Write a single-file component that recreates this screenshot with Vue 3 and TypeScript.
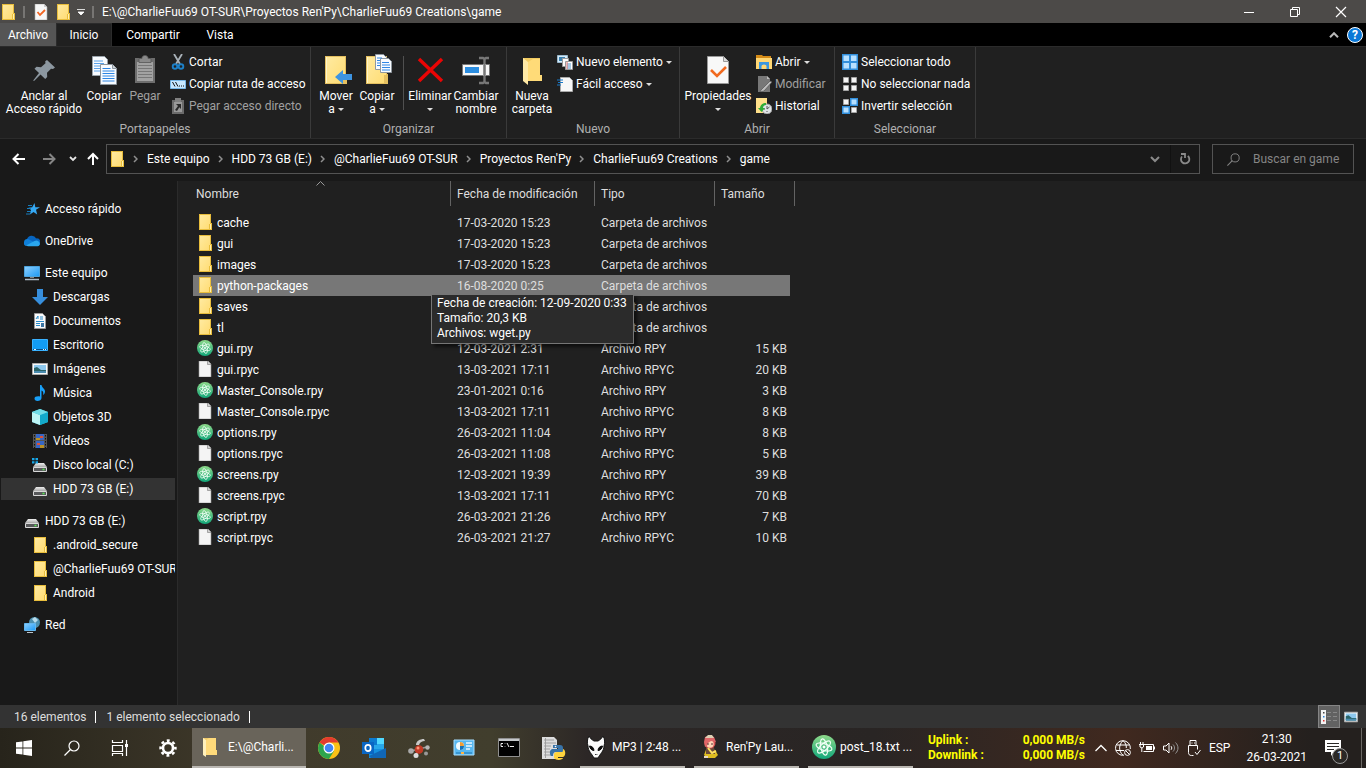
<script setup lang="ts">
interface NavItem { label: string; icon: string; level: number; active?: boolean }
interface FileRow { name: string; date: string; type: string; size: string; icon: string; selected?: boolean }
interface SmallAction { label: string; icon: string; menu?: boolean; disabled?: boolean }

const selectActions: SmallAction[] = [
  { label: 'Seleccionar todo', icon: 'sel-all' },
  { label: 'No seleccionar nada', icon: 'sel-none' },
  { label: 'Invertir selección', icon: 'sel-inv' },
]
const openActions: SmallAction[] = [
  { label: 'Abrir', icon: 'open', menu: true },
  { label: 'Modificar', icon: 'edit', disabled: true },
  { label: 'Historial', icon: 'history' },
]
const newActions: SmallAction[] = [
  { label: 'Nuevo elemento', icon: 'new-item', menu: true },
  { label: 'Fácil acceso', icon: 'easy', menu: true },
]
const clipActions: SmallAction[] = [
  { label: 'Cortar', icon: 'cut' },
  { label: 'Copiar ruta de acceso', icon: 'path' },
  { label: 'Pegar acceso directo', icon: 'shortcut', disabled: true },
]

const crumbs: string[] = ['Este equipo', 'HDD 73 GB (E:)', '@CharlieFuu69 OT-SUR', "Proyectos Ren'Py", 'CharlieFuu69 Creations', 'game']

const navGroups: NavItem[][] = [
  [{ label: 'Acceso rápido', icon: 'quick', level: 1 }],
  [{ label: 'OneDrive', icon: 'onedrive', level: 1 }],
  [
    { label: 'Este equipo', icon: 'pc', level: 1 },
    { label: 'Descargas', icon: 'download', level: 2 },
    { label: 'Documentos', icon: 'documents', level: 2 },
    { label: 'Escritorio', icon: 'desktop', level: 2 },
    { label: 'Imágenes', icon: 'pictures', level: 2 },
    { label: 'Música', icon: 'music', level: 2 },
    { label: 'Objetos 3D', icon: 'cube', level: 2 },
    { label: 'Vídeos', icon: 'videos', level: 2 },
    { label: 'Disco local (C:)', icon: 'disk-win', level: 2 },
    { label: 'HDD 73 GB (E:)', icon: 'disk', level: 2, active: true },
  ],
  [
    { label: 'HDD 73 GB (E:)', icon: 'disk', level: 1 },
    { label: '.android_secure', icon: 'folder', level: 2 },
    { label: '@CharlieFuu69 OT-SUR', icon: 'folder', level: 2 },
    { label: 'Android', icon: 'folder', level: 2 },
  ],
  [{ label: 'Red', icon: 'network', level: 1 }],
]

const folder = (name: string, date: string, selected = false): FileRow =>
  ({ name, date, type: 'Carpeta de archivos', size: '', icon: 'folder', selected })
const rpy = (name: string, date: string, size: string): FileRow =>
  ({ name: name + '.rpy', date, type: 'Archivo RPY', size: size + ' KB', icon: 'atom' })
const rpyc = (name: string, date: string, size: string): FileRow =>
  ({ name: name + '.rpyc', date, type: 'Archivo RPYC', size: size + ' KB', icon: 'file' })

const files: FileRow[] = [
  folder('cache', '17-03-2020 15:23'),
  folder('gui', '17-03-2020 15:23'),
  folder('images', '17-03-2020 15:23'),
  folder('python-packages', '16-08-2020 0:25', true),
  folder('saves', '17-03-2020 15:23'),
  folder('tl', '17-03-2020 15:23'),
  rpy('gui', '12-03-2021 2:31', '15'),
  rpyc('gui', '13-03-2021 17:11', '20'),
  rpy('Master_Console', '23-01-2021 0:16', '3'),
  rpyc('Master_Console', '13-03-2021 17:11', '8'),
  rpy('options', '26-03-2021 11:04', '8'),
  rpyc('options', '26-03-2021 11:08', '5'),
  rpy('screens', '12-03-2021 19:39', '39'),
  rpyc('screens', '13-03-2021 17:11', '70'),
  rpy('script', '26-03-2021 21:26', '7'),
  rpyc('script', '26-03-2021 21:27', '10'),
]

const pinned: { icon: string; label: string }[] = [
  { icon: 'chrome', label: 'Chrome' },
  { icon: 'outlook', label: 'Outlook' },
  { icon: 'molecule', label: 'Monitor' },
  { icon: 'control', label: 'Panel de control' },
  { icon: 'cmd', label: 'Símbolo del sistema' },
  { icon: 'python', label: 'Python' },
]
const running: { icon: string; label: string }[] = [
  { icon: 'foobar', label: 'MP3 | 2:48 ...' },
  { icon: 'renpy', label: "Ren'Py Lau..." },
  { icon: 'atom', label: 'post_18.txt ...' },
]
</script>

<template>
  <div class="screen">
    <svg class="defs" aria-hidden="true">
      <defs>
        <linearGradient id="gFolder" x1="0" y1="0" x2="1" y2="1">
          <stop offset="0" stop-color="#ffeaa0" /><stop offset="1" stop-color="#ffdc73" />
        </linearGradient>
        <linearGradient id="gBlue" x1="0" y1="0" x2="1" y2="1">
          <stop offset="0" stop-color="#8fd0ff" /><stop offset="1" stop-color="#1c9af5" />
        </linearGradient>
        <linearGradient id="gAtom" x1="0" y1="0" x2="0" y2="1">
          <stop offset="0" stop-color="#8ed98a" /><stop offset="1" stop-color="#12a77a" />
        </linearGradient>
        <linearGradient id="gDisk" x1="0" y1="0" x2="0" y2="1">
          <stop offset="0" stop-color="#eeeeee" /><stop offset="1" stop-color="#a9a9a9" />
        </linearGradient>
      </defs>
      <symbol id="folder" viewBox="0 0 16 16">
        <path d="M2 0h12v9h1v7H2z" fill="#e8bd3c" /><path d="M3 1h10v9h-1v5H3z" fill="url(#gFolder)" /><path d="M13 10h1v5h-1z" fill="#fff0b0" />
      </symbol>
      <symbol id="check-file" viewBox="0 0 16 16">
        <path d="M2 0h9l3 3v13H2z" fill="#f7f7f7" stroke="#aaa" stroke-width=".6" /><path d="M11 0v3h3" fill="#ccc" /><path d="M4.500 8l2.500 3 5-5" fill="none" stroke="#f26522" stroke-width="1.800" />
      </symbol>
      <symbol id="file" viewBox="0 0 16 16">
        <path d="M2 0h9l3 3v13H2z" fill="#f4f4f4" stroke="#999" stroke-width=".6" /><path d="M10.500 0v3.500H14" fill="#cfcfcf" stroke="#888" stroke-width=".7" />
      </symbol>
      <symbol id="atom" viewBox="0 0 16 16">
        <circle cx="8" cy="8" r="8" fill="url(#gAtom)" />
        <g fill="none" stroke="#f0fff6" stroke-width=".8">
          <ellipse cx="8" cy="8" rx="2.200" ry="5.500" transform="rotate(-12 8 8)" />
          <ellipse cx="8" cy="8" rx="2.200" ry="5.500" transform="rotate(48 8 8)" />
          <ellipse cx="8" cy="8" rx="2.200" ry="5.500" transform="rotate(108 8 8)" />
        </g>
        <circle cx="8" cy="8" r="1" fill="#fff" />
      </symbol>
      <symbol id="pin" viewBox="0 0 32 32">
        <path d="M19 6l8 7.500-2 1.500-2-.3-4 4 .2 4.300-2 2-4.700-4.500L6 27l-.8-.6 5.800-7.400-4.500-4.200 2-2 4.500.4 4.500-4-.3-2z" fill="#8c97a0" />
      </symbol>
      <symbol id="copy" viewBox="0 0 32 32">
        <path d="M4.500 2.500h12l3 3v16h-15z" fill="#f8fbff" stroke="#9aa3ab" /><path d="M6 7h9M6 9.500h10M6 12h10M6 14.500h10M6 17h10" stroke="#5aa2ea" />
        <path d="M12.500 10.500h12l4 4v16h-16z" fill="#f8fbff" stroke="#8e979f" /><path d="M24.500 10.500v4h4" fill="#cdd5dc" stroke="#8e979f" />
        <path d="M14.500 14.500h8M14.500 17h12M14.500 19.500h12M14.500 22h12M14.500 24.500h12M14.500 27h12" stroke="#2e86e4" />
      </symbol>
      <symbol id="paste" viewBox="0 0 32 32">
        <path d="M6 4h20v25H6z" fill="#6e6e6e" /><path d="M8 8h16v19H8z" fill="#a2a2a2" /><path d="M10 4.500h3V3l2-1.500h2L19 3v1.500h3v4H10z" fill="#8a8a8a" stroke="#555" stroke-width=".8" />
        <path d="M9 11.500h14M9 14.500h14M9 17.500h14M9 20.500h14M9 23.500h14" stroke="#777" />
      </symbol>
      <symbol id="cut" viewBox="0 0 16 16">
        <path d="M4 0l6 10M12 0L6 10" stroke="#a9b2b9" stroke-width="1.800" /><circle cx="5" cy="12.500" r="2.300" fill="none" stroke="#1d80c8" stroke-width="1.900" /><circle cx="11" cy="12.500" r="2.300" fill="none" stroke="#1d80c8" stroke-width="1.900" />
      </symbol>
      <symbol id="path" viewBox="0 0 16 16">
        <path d="M.5 4.500h15v8H.5z" fill="#c8e8ff" stroke="#78b8e8" /><path d="M2.500 6l2.500 4.500M5.500 6L8 10.500M9 10h1M11 10h1M13 10h1" stroke="#111" />
      </symbol>
      <symbol id="shortcut" viewBox="0 0 16 16">
        <path d="M2 2h12v14H2z" fill="#6b6b6b" /><path d="M4 4h8v10H4z" fill="#999" /><path d="M5 0h6v4H5z" fill="#808080" /><path d="M6 6h5v5L9.300 9.300 7 13l-2-1 3-4z" fill="#2a2a2a" />
      </symbol>
      <symbol id="big-folder" viewBox="0 0 32 32">
        <path d="M5 2h21v18h1v10H5z" fill="#e5c060" /><path d="M7 3h18v18h-2v8H7z" fill="url(#gFolder)" /><path d="M6 3h1v26H6z" fill="#fff4c8" />
      </symbol>
      <symbol id="move" viewBox="0 0 32 32">
        <use href="#big-folder" /><path d="M15 23l8-7v4h9v6h-9v4z" fill="#3d94e2" />
      </symbol>
      <symbol id="copy-to" viewBox="0 0 32 32">
        <use href="#big-folder" /><path d="M14.500.5h8l3 3v12h-11z" fill="#f8fbff" stroke="#8e979f" />
        <path d="M19.500 4.500h8l3 3v11h-11z" fill="#f8fbff" stroke="#8e979f" /><path d="M16 4h5M16 6.500h3M16 9h3M16 11.500h3M21 8.500h7M21 11h8M21 13.500h8M21 16h8" stroke="#2e86e4" />
      </symbol>
      <symbol id="delete" viewBox="0 0 32 32"><path d="M5 5l23 22M28 5L5 27" stroke="#ea0505" stroke-width="3.400" /></symbol>
      <symbol id="rename" viewBox="0 0 32 32">
        <path d="M2.500 10.500h27v11h-27z" fill="#f8f8f8" stroke="#777" /><path d="M5 13h14v6H5z" fill="#2b8de0" /><path d="M23 10h3v12h-3z" fill="#ddd" />
        <path d="M19 4h4l1.500 1L26 4h3M19 29h4l1.500-1 1.500 1h3M24.500 5v23" fill="none" stroke="#777" stroke-width="2.400" />
      </symbol>
      <symbol id="new-folder" viewBox="0 0 32 32">
        <path d="M7 4h17v17h2v6H11l-4-2z" fill="#f2cb61" /><path d="M7 4l5 4v23l-5-4z" fill="#ffe9a5" /><path d="M12 8l5-3h7v16h2v6H12z" fill="#ffdb78" />
      </symbol>
      <symbol id="new-item" viewBox="0 0 16 16">
        <path d="M.5 1.500h10v7H.5z" fill="#d4ebfa" stroke="#9bb9cc" /><path d="M2 3h6v4H2z" fill="#397fae" /><path d="M5.500 4.500h6v8h-6z" fill="#fafafa" stroke="#999" /><path d="M8.500 7.500h7v8h-7z" fill="#fff" stroke="#999" /><path d="M10 10h4M10 12h4M10 14h4" stroke="#4a92c9" /><path d="M10 8v7" stroke="#dc6c6c" />
      </symbol>
      <symbol id="easy" viewBox="0 0 16 16">
        <path d="M3.500 1.500h9l3 3v11h-12z" fill="#f8f8f8" stroke="#aaa" /><path d="M0 4h6M1 6.500h5M0 9h4" stroke="#1979c8" stroke-width="1.200" />
      </symbol>
      <symbol id="properties" viewBox="0 0 32 32">
        <path d="M5.500 2.500h16l5 5v22h-21z" fill="#f8f8f8" stroke="#999" /><path d="M21.500 2.500v5h5" fill="#ddd" stroke="#999" /><path d="M9 16l6 6 9-9" fill="none" stroke="#f16a20" stroke-width="2.600" />
      </symbol>
      <symbol id="open" viewBox="0 0 16 16">
        <path d="M0 1h6l1 1h8v3H0z" fill="#d58b17" /><path d="M0 4h16v11H0z" fill="#ffd774" /><path d="M3 8h10v7h-2.500v-3a2.500 1.500 0 0 0-5 0v3H3z" fill="#3b97df" />
      </symbol>
      <symbol id="edit" viewBox="0 0 16 16">
        <path d="M2 0h9l3 3v13H2z" fill="#777" /><path d="M11 0v3h3" fill="#bbb" /><path d="M5 14l9-9 2 1-8 9-4 1z" fill="#bcbcbc" stroke="#555" stroke-width=".7" />
      </symbol>
      <symbol id="history" viewBox="0 0 16 16">
        <path d="M0 0h11v15H0z" fill="#ffe08a" /><circle cx="11" cy="11" r="5" fill="#dfe3e6" stroke="#999" /><path d="M11 8v3l2.500-2M8 11h1M11 14v-1" fill="none" stroke="#555" /><path d="M10 5C6 5 4 8 4 10H2l3.500 4L9 10H7c0-2 1-3 3-3z" fill="#30ad36" />
      </symbol>
      <symbol id="sel-all" viewBox="0 0 16 16">
        <path d="M0 0h16v16H0z" fill="#318fdc" /><path d="M1.500 1.500h5.500v5.500H1.500zM9 1.500h5.500v5.500H9zM1.500 9h5.500v5.500H1.500zM9 9h5.500v5.500H9z" fill="#b7e0ff" />
      </symbol>
      <symbol id="sel-none" viewBox="0 0 16 16"><path d="M1.500 1.500h5v5h-5zM9.500 1.500h5v5h-5zM1.500 9.500h5v5h-5zM9.500 9.500h5v5h-5z" fill="#f5f5f5" stroke="#a5a5a5" /></symbol>
      <symbol id="sel-inv" viewBox="0 0 16 16">
        <path d="M1.500 1.500h5v5h-5zM9.500 9.500h5v5h-5z" fill="#f5f5f5" stroke="#a5a5a5" /><path d="M8 0h8v8H8zM0 8h8v8H0z" fill="#318fdc" /><path d="M9.500 1.500h5v5h-5zM1.500 9.500h5v5h-5z" fill="#b7e0ff" />
      </symbol>
      <symbol id="quick" viewBox="0 0 16 16">
        <path d="M10.500 2l.8 4.200H16l-4 2.600 1.200 4.700L9.500 11 6 13.500l1-4.500-2.500-2.300 3.700-.4z" fill="#35a8f3" /><path d="M4 4.500h4M3 7.500h4M3 10.500h4M2 13h4" stroke="#177cbd" />
      </symbol>
      <symbol id="onedrive" viewBox="0 0 16 16">
        <path d="M3 12a3.500 3.500 0 0 1 0-6 5 5 0 0 1 9.200-.6A3.700 3.700 0 0 1 13 13z" fill="#0765c0" /><path d="M0 9a3.400 3.400 0 0 1 4-3l6 3-8 4A3 3 0 0 1 0 9z" fill="#0f7fd8" /><path d="M2 12.500L10.500 8a4 4 0 0 1 5 1.500 2.500 2.500 0 0 1-2 3.700H4z" fill="#2aa7ef" />
      </symbol>
      <symbol id="pc" viewBox="0 0 16 16">
        <path d="M.5 1.500h15v10H.5z" fill="url(#gBlue)" stroke="#4da3dc" /><path d="M6 12h4v1H6z" fill="#888" /><path d="M1 14.500h14" stroke="#aebcc8" stroke-width="1.500" />
      </symbol>
      <symbol id="download" viewBox="0 0 16 16"><path d="M5 0h6v8h5l-8 8-8-8h5z" fill="#378fdd" /></symbol>
      <symbol id="documents" viewBox="0 0 16 16">
        <path d="M2.500.5h8l3 3v12h-11z" fill="#fafafa" stroke="#9a9a9a" /><path d="M4 6l2-3v3M8 4h3M8 6h3M4 8.500h8M4 10.500h4M4 12.500h4" fill="none" stroke="#298bc9" /><path d="M9 10h3v4H9z" fill="#3c75a3" />
      </symbol>
      <symbol id="desktop" viewBox="0 0 16 16"><path d="M.5 2.500h15v11H.5z" fill="#129cf5" stroke="#3ab2ff" /><path d="M1 12.500h14" stroke="#07508a" /><path d="M2 12.500h2M11 12.500h1M13 12.500h1" stroke="#e0f3ff" /></symbol>
      <symbol id="pictures" viewBox="0 0 16 16">
        <path d="M.5 2.500h15v11H.5z" fill="#f8f8f8" stroke="#aaa" /><path d="M2 4h12v8H2z" fill="#8dc8ee" /><path d="M2 7l3-1 4 3h5v3H2z" fill="#2b6468" /><path d="M2 10h12v2H2z" fill="#4a8cb0" />
      </symbol>
      <symbol id="music" viewBox="0 0 16 16"><path d="M8 0h1.500c.5 3 4 4 3.500 7-.3 1.500-1 2.500-2 3 1-3-.5-4-1.500-4.500V13c0 2-2 3-4 3s-3-1-3-2.500S4.500 11 8 11.500z" fill="#18a0f8" /></symbol>
      <symbol id="cube" viewBox="0 0 16 16"><path d="M8 0l8 3v10l-8 3-8-3V3z" fill="#33c3d7" /><path d="M0 3l8 3v10l-8-3z" fill="#bdf5f5" /><path d="M8 6l8-3v10l-8 3z" fill="#13a9ca" /><path d="M0 3l8-3 8 3-8 3z" fill="#72dce6" /></symbol>
      <symbol id="videos" viewBox="0 0 16 16">
        <path d="M1 1h14v14H1z" fill="#555" /><path d="M4 1h8v6H4z" fill="#3766c4" /><path d="M4 8h8v7H4z" fill="#3766c4" /><path d="M4 5h4v2H4zM8 12h4v3H8z" fill="#b99025" /><path d="M8 3h3v2H8zM5 10h3v2H5z" fill="#df5030" /><path d="M2.500 2v13M13.500 2v13" stroke="#111" stroke-dasharray="1.500 1.500" />
      </symbol>
      <symbol id="disk" viewBox="0 0 16 16"><path d="M4 6h8l3 4H1z" fill="url(#gDisk)" /><path d="M1.500 10.500h13v4h-13z" fill="#58595b" stroke="#d8d8d8" /><path d="M10.500 12.500h2" stroke="#55ea50" stroke-width="1.500" /></symbol>
      <symbol id="disk-win" viewBox="0 0 16 16"><use href="#disk" /><path d="M0 1h2.500v2.200H0zM3.500 1H6v2.200H3.500zM0 4.200h2.500v2.200H0zM3.500 4.200H6v2.200H3.500z" fill="#18a7e8" /></symbol>
      <symbol id="network" viewBox="0 0 16 16"><circle cx="10.500" cy="5.500" r="5.500" fill="#4c8fae" /><path d="M8 2l3-2 3 3-3 3z" fill="#b9dceb" /><path d="M.5 6.500h11v7H.5z" fill="url(#gBlue)" stroke="#65b7ee" /><path d="M3 15.500h6" stroke="#b8c4cc" /></symbol>
      <symbol id="mag" viewBox="0 0 16 16"><circle cx="10" cy="6" r="5" fill="none" stroke="currentColor" stroke-width="1.200" /><path d="M6.500 9.500L.5 15.500" stroke="currentColor" stroke-width="1.300" /></symbol>
      <symbol id="task-folder" viewBox="0 0 24 24"><path d="M5 3h13v12h1v5H8l-3-1z" fill="#eec96a" /><path d="M5 3l3 2v17l-3-2z" fill="#fff0bb" /><path d="M8 5l3-2h7v12h1v5H8z" fill="#ffda7a" /></symbol>
      <symbol id="chrome" viewBox="0 0 24 24">
        <circle cx="12" cy="12" r="11" fill="#fbc116" /><path d="M12 12L2.500 6.500A11 11 0 0 1 21.500 6.500H12z" fill="#e33b2e" /><path d="M2.500 6.500A11 11 0 0 0 12 23l5-8-5-1z" fill="#2da44e" /><circle cx="12" cy="12" r="5.500" fill="#fff" /><circle cx="12" cy="12" r="4.300" fill="#4285f4" />
      </symbol>
      <symbol id="outlook" viewBox="0 0 24 24">
        <path d="M7 2h15v13H7z" fill="#28a8ea" /><path d="M7 2h8v7H7z" fill="#0c7bd0" /><path d="M15 2h7v6h-7z" fill="#50d9ff" /><path d="M7 13h17v9H7z" fill="#1490df" /><path d="M7 20l17-8v10H9z" fill="#1066b5" /><path d="M0 6h12v12H0z" fill="#0a66c3" /><ellipse cx="6" cy="12" rx="2.700" ry="3.200" fill="none" stroke="#fff" stroke-width="1.700" />
      </symbol>
      <symbol id="molecule" viewBox="0 0 24 24">
        <path d="M4 15l8-2 8-2M9 19l3-6" stroke="#999" stroke-width="1.800" /><circle cx="12" cy="13.500" r="4.300" fill="#c23a26" /><circle cx="11" cy="12" r="1.500" fill="#ff9478" /><circle cx="4" cy="15" r="2.800" fill="#aaa" /><circle cx="20.500" cy="11.500" r="2.200" fill="#b5b5b5" /><circle cx="9" cy="19.500" r="2.500" fill="#ddd" /><path d="M9 9c0-4 4-6 8-6l1 2c-3 0-5 1-6 4z" fill="#c8c8c8" /><circle cx="19" cy="17.500" r="2" fill="#999" />
      </symbol>
      <symbol id="control" viewBox="0 0 24 24"><path d="M2 4h20v15H2z" fill="#58b7f0" stroke="#a9defe" /><circle cx="8" cy="10" r="4" fill="#effaff" /><path d="M8 10V6a4 4 0 0 1 4 4z" fill="#f19c35" /><path d="M8 10h4a4 4 0 0 1-4 4z" fill="#1772b6" /><path d="M14 7h6M14 10h6M14 13h4" stroke="#eaf8ff" stroke-width="1.500" /><path d="M4 17h16" stroke="#1972af" /><path d="M9 16h3v2H9z" fill="#ffb442" /></symbol>
      <symbol id="cmd" viewBox="0 0 24 24"><path d="M1.500 2.500h21v18h-21z" fill="#020202" stroke="#909090" /><path d="M2 3h20v2H2z" fill="#c5c8ca" /><path d="M6 7.500H4v3h2M8 7.500v.5M8 10v.5M10 7l2 4M13 10.500h4" fill="none" stroke="#eee" /></symbol>
      <symbol id="python" viewBox="0 0 24 24">
        <path d="M0 1h12l3 3v19H0z" fill="#ddd" /><path d="M2 4h10M2 7h12M2 10h7M2 13h6M2 16h6M2 19h7M3.500 2v20" stroke="#999" stroke-width=".9" /><path d="M11 9h7c2 0 3 1 3 3v4h-7c-2 0-3 1-3 4h-2c-2-3-1-6 1-7h6v-1h-5z" fill="#3973a7" /><path d="M21 13c3 1 3 7 0 8h-5v1h5c0 2-7 3-9 0v-4c0-1 1-2 3-2h5c1 0 1-1 1-3z" fill="#ffd43e" /><circle cx="13.500" cy="10.500" r=".8" fill="#fff" />
      </symbol>
      <symbol id="foobar" viewBox="0 0 24 24">
        <path d="M5 1c1 2 3 4 5 5h4c2-1 4-3 5-5 2 3 2 7 1 10 0 5-4 8-6 12h-4C8 19 4 16 4 11 3 8 3 4 5 1z" fill="#f9f9f9" stroke="#111" /><path d="M5.500 11c2.500 0 4.500 2 4.500 4.500-2.500 0-4-2-4.500-4.500zM18.500 11c-2.500 0-4.500 2-4.500 4.500 2.500 0 4-2 4.500-4.500z" fill="#080808" stroke="#080808" /><path d="M11 19h.8v1H11zM12.500 19h.8v1h-.8z" fill="#080808" />
      </symbol>
      <symbol id="renpy" viewBox="0 0 24 24">
        <path d="M9 12l-3 8 3 3h8l3-3-3-5z" fill="#dfbd21" /><path d="M8 12h8l1 7H8z" fill="#6b4938" /><circle cx="12" cy="8" r="5.500" fill="#d85255" /><circle cx="12" cy="9" r="3.700" fill="#ffd4b5" /><path d="M6 7l1-5 5-2 4 2 2 5-5-1-3 2-1 3-2 1z" fill="#df6668" /><path d="M7 3l3-3h4l2 3z" fill="#ddd1b5" /><path d="M10 8v2M14 8v2" stroke="#583039" /><path d="M10 13l4 5 4-2" fill="none" stroke="#ffe263" stroke-width="2" /><path d="M6 21h4v2H6z" fill="#e7d8c5" />
      </symbol>
    </svg>

    <header class="titlebar">
      <svg class="i16"><use href="#folder" /></svg><span class="bar"></span>
      <button class="bare" aria-label="Propiedades"><svg class="i16"><use href="#check-file" /></svg></button>
      <button class="bare" aria-label="Nueva carpeta"><svg class="i16"><use href="#folder" /></svg></button>
      <button class="bare" aria-label="Personalizar"><svg width="8" height="8" viewBox="0 0 8 8"><path d="M0 1.500h8M1 4h6L4 7z" stroke="#fff" fill="#fff" stroke-width=".8" /></svg></button>
      <span class="bar"></span>
      <h1>E:\@CharlieFuu69 OT-SUR\Proyectos Ren'Py\CharlieFuu69 Creations\game</h1>
      <div class="winctl">
        <button class="bare" aria-label="Minimizar"><svg width="12" height="12" viewBox="0 0 12 12"><path d="M1 6.500h10" stroke="#fff" /></svg></button>
        <button class="bare" aria-label="Restaurar"><svg width="12" height="12" viewBox="0 0 12 12"><path d="M1.500 3.500h7v7h-7zM3.500 3V1.500h7v7H9" fill="none" stroke="#fff" /></svg></button>
        <button class="bare" aria-label="Cerrar"><svg width="12" height="12" viewBox="0 0 12 12"><path d="M1 1l10 10M11 1L1 11" stroke="#fff" stroke-width="1.200" /></svg></button>
      </div>
    </header>

    <nav class="tabs">
      <button class="tab file">Archivo</button>
      <button class="tab current">Inicio</button>
      <button class="tab share">Compartir</button>
      <button class="tab view">Vista</button>
      <button class="bare collapse" aria-label="Minimizar la cinta"><svg width="10" height="6" viewBox="0 0 10 6"><path d="M1 5.200l4-4 4 4" fill="none" stroke="#b9b9b9" stroke-width="2" /></svg></button>
      <button class="help" aria-label="Ayuda">?</button>
    </nav>

    <section class="ribbon">
      <div class="group">
        <div class="tools clip">
          <button class="big wide"><svg><use href="#pin" /></svg><span>Anclar al<br>Acceso rápido</span></button>
          <button class="big narrow"><svg><use href="#copy" /></svg><span>Copiar</span></button>
          <button class="big" disabled><svg><use href="#paste" /></svg><span>Pegar</span></button>
          <div class="stack">
            <button v-for="a in clipActions" :key="a.label" class="small" :disabled="a.disabled"><svg class="i16"><use :href="'#' + a.icon" /></svg>{{ a.label }}</button>
          </div>
        </div>
        <div class="caption">Portapapeles</div>
      </div>
      <div class="group">
        <div class="tools">
          <button class="big"><svg><use href="#move" /></svg><span>Mover<br>a<i class="tri"></i></span></button>
          <button class="big narrow"><svg><use href="#copy-to" /></svg><span>Copiar<br>a<i class="tri"></i></span></button>
          <span class="divider"></span>
          <button class="big mid"><svg><use href="#delete" /></svg><span>Eliminar<br><i class="tri alone"></i></span></button>
          <button class="big mid"><svg><use href="#rename" /></svg><span>Cambiar<br>nombre</span></button>
        </div>
        <div class="caption">Organizar</div>
      </div>
      <div class="group">
        <div class="tools">
          <button class="big"><svg><use href="#new-folder" /></svg><span>Nueva<br>carpeta</span></button>
          <div class="stack">
            <button v-for="a in newActions" :key="a.label" class="small" :disabled="a.disabled"><svg class="i16"><use :href="'#' + a.icon" /></svg>{{ a.label }}<i v-if="a.menu" class="tri alone"></i></button>
          </div>
        </div>
        <div class="caption">Nuevo</div>
      </div>
      <div class="group">
        <div class="tools">
          <button class="big props"><svg><use href="#properties" /></svg><span>Propiedades<br><i class="tri alone"></i></span></button>
          <div class="stack">
            <button v-for="a in openActions" :key="a.label" class="small" :disabled="a.disabled"><svg class="i16"><use :href="'#' + a.icon" /></svg>{{ a.label }}<i v-if="a.menu" class="tri alone"></i></button>
          </div>
        </div>
        <div class="caption">Abrir</div>
      </div>
      <div class="group">
        <div class="tools select">
          <div class="stack">
            <button v-for="a in selectActions" :key="a.label" class="small"><svg class="i16"><use :href="'#' + a.icon" /></svg>{{ a.label }}</button>
          </div>
        </div>
        <div class="caption">Seleccionar</div>
      </div>
    </section>

    <div class="addressbar">
      <button class="bare nav-arrow" aria-label="Atrás"><svg width="14" height="12" viewBox="0 0 14 12"><path d="M13 6H2M6.500 1L1.500 6l5 5" fill="none" stroke="#fff" stroke-width="2" /></svg></button>
      <button class="bare nav-arrow" aria-label="Adelante"><svg width="14" height="12" viewBox="0 0 14 12"><path d="M1 6h11M7.500 1l5 5-5 5" fill="none" stroke="#858585" stroke-width="2" /></svg></button>
      <button class="bare recent" aria-label="Ubicaciones recientes"><svg width="8" height="6" viewBox="0 0 8 6"><path d="M1 1l3 3 3-3" fill="none" stroke="#e5e5e5" stroke-width="1.800" /></svg></button>
      <button class="bare up" aria-label="Subir"><svg width="12" height="14" viewBox="0 0 12 14"><path d="M6 13V2M1 7l5-5 5 5" fill="none" stroke="#fff" stroke-width="2" /></svg></button>
      <div class="path">
        <svg class="i16"><use href="#folder" /></svg>
        <template v-for="c in crumbs" :key="c">
          <svg class="sep" width="5" height="8" viewBox="0 0 5 8"><path d="M1 1l3 3-3 3" fill="none" stroke="#8f8f8f" stroke-width="1.500" /></svg>
          <button class="crumb">{{ c }}</button>
        </template>
        <button class="bare drop" aria-label="Historial de direcciones"><svg width="10" height="7" viewBox="0 0 10 7"><path d="M1 1l4 4 4-4" fill="none" stroke="#8a8a8a" stroke-width="2" /></svg></button>
        <button class="bare reload" aria-label="Actualizar"><svg width="12" height="12" viewBox="0 0 12 12"><path d="M8.800 3A4.200 4.200 0 1 1 3 3.500M2 1h4v4" fill="none" stroke="#8a8a8a" stroke-width="1.800" /></svg></button>
      </div>
      <label class="search"><svg width="13" height="13"><use href="#mag" /></svg><input type="text" aria-label="Buscar" placeholder="Buscar en game"></label>
    </div>

    <main class="body">
      <aside class="sidebar">
        <ul v-for="(g, gi) in navGroups" :key="gi">
          <li v-for="n in g" :key="n.label"><a href="#" :class="['nav', 'level' + n.level, { active: n.active }]"><svg class="i16"><use :href="'#' + n.icon" /></svg>{{ n.label }}</a></li>
        </ul>
      </aside>
      <section class="content">
        <table>
          <colgroup><col class="c-name"><col class="c-date"><col class="c-type"><col class="c-size"></colgroup>
          <thead>
            <tr>
              <th><svg class="sort" width="9" height="5" viewBox="0 0 9 5"><path d="M.5 4.500l4-4 4 4" fill="none" stroke="#999" /></svg>Nombre</th>
              <th>Fecha de modificación</th><th>Tipo</th><th>Tamaño</th>
            </tr>
          </thead>
          <tbody>
            <tr v-for="f in files" :key="f.name" :class="{ selected: f.selected }">
              <td><div class="name"><svg class="i16"><use :href="'#' + f.icon" /></svg>{{ f.name }}</div></td>
              <td>{{ f.date }}<div v-if="f.selected" class="tooltip" role="tooltip">Fecha de creación: 12-09-2020 0:33<br>Tamaño: 20,3 KB<br>Archivos: wget.py</div></td>
              <td>{{ f.type }}</td>
              <td>{{ f.size }}</td>
            </tr>
          </tbody>
        </table>
      </section>
    </main>

    <footer class="status">
      <span>16 elementos</span><span>1 elemento seleccionado</span>
      <div class="views">
        <button class="view-btn on" aria-label="Detalles"><svg width="16" height="14" viewBox="0 0 16 14"><path d="M0 0h5v14H0z" fill="#f3f3f3" /><path d="M2 2h1.500v1.500H2z" fill="#444" /><path d="M2 6h1.500v1.500H2z" fill="#2680d8" /><path d="M2 10h1.500v1.500H2z" fill="#d33" /><path d="M6 2.500h4M12 2.500h4M6 6.500h4M12 6.500h4M6 10.500h4M12 10.500h4" stroke="#888" /></svg></button>
        <button class="view-btn" aria-label="Iconos grandes"><svg class="i14"><use href="#pictures" /></svg></button>
      </div>
    </footer>

    <div class="taskbar">
      <button class="sys" aria-label="Inicio"><svg width="16" height="16" viewBox="0 0 16 16"><path d="M0 2.300l6.500-.9v6.200H0zM7.300 1.300L16 0v7.600H7.300zM0 8.400h6.500v6.200L0 13.700zM7.300 8.400H16V16l-8.700-1.300z" fill="#fff" /></svg></button>
      <button class="sys" aria-label="Buscar"><svg class="i16"><use href="#mag" /></svg></button>
      <button class="sys" aria-label="Vista de tareas"><svg width="18" height="16" viewBox="0 0 18 16"><path d="M1.500 0v2.500h10V0M1.500 5.500h10v6h-10zM1.500 16v-2.500h10V16M15.500 0v16" fill="none" stroke="#fff" stroke-width="1.200" /><path d="M14 4h3v3h-3z" fill="#fff" /></svg></button>
      <button class="sys" aria-label="Configuración"><svg width="18" height="18" viewBox="0 0 18 18"><circle cx="9" cy="9" r="5" fill="none" stroke="#fff" stroke-width="2.600" /><circle cx="9" cy="9" r="7.400" fill="none" stroke="#fff" stroke-width="2.600" stroke-dasharray="2.900 2.912" stroke-dashoffset="1.450" /></svg></button>
      <button class="task open"><svg><use href="#task-folder" /></svg>E:\@Charli...</button>
      <button v-for="p in pinned" :key="p.icon" class="pinned" :aria-label="p.label"><svg><use :href="'#' + p.icon" /></svg></button>
      <div class="apps">
        <button v-for="r in running" :key="r.icon" class="task"><svg><use :href="'#' + r.icon" /></svg>{{ r.label }}</button>
      </div>
      <div class="tray">
        <dl class="meter"><dt>Uplink :</dt><dd>0,000 MB/s</dd><dt>Downlink :</dt><dd>0,000 MB/s</dd></dl>
        <button class="bare" aria-label="Iconos ocultos"><svg width="12" height="8" viewBox="0 0 12 8"><path d="M.5 7L6 1.500 11.500 7" fill="none" stroke="#fff" stroke-width="1.300" /></svg></button>
        <button class="bare" aria-label="Red"><svg width="16" height="16" viewBox="0 0 16 16"><path d="M8 .7a7.300 7.300 0 1 0 1 14.500M8 .7A7.300 7.300 0 0 1 15.300 9M8 .7c-4.500 4-4.500 10.500 0 14.500M8 .7c2.500 2 3.500 4.500 3.300 7.300M1.500 5h13M1 10.500h8" fill="none" stroke="#fff" /><circle cx="12.500" cy="12.500" r="2.900" fill="none" stroke="#fff" /><path d="M10.500 10.500l4 4" stroke="#fff" /></svg></button>
        <button class="bare" aria-label="Batería"><svg width="16" height="14" viewBox="0 0 16 14"><path d="M5 3.500h9.500v7h-10M15.500 5.500v3" fill="none" stroke="#fff" /><path d="M7 5h6v4H7z" fill="#fff" /><path d="M0 3.500h5M1.500 1v3M4 1v3M1 4v2l2 1 1.500-1V4M2.800 7v4" fill="none" stroke="#fff" /></svg></button>
        <button class="bare" aria-label="Volumen"><svg width="16" height="14" viewBox="0 0 16 14"><path d="M.5 5h2.500l3-3v10L3 9H.5z" fill="none" stroke="#fff" /><path d="M8 5.200c1 1 1 2.600 0 3.600" fill="none" stroke="#fff" /><path d="M10 3.500c2 2 2 5 0 7M12.500 1.500c3.300 3.300 3.300 7.700 0 11" fill="none" stroke="#999" /></svg></button>
        <button class="bare" aria-label="USB"><svg width="14" height="16" viewBox="0 0 14 16"><path d="M3 5.500v-5h6v5M1.500 5.500h9v4M1.500 5.500v7c0 2 1 3 3 3h2M4.500 3h1M7 3h1M8 12l2 2.500L13.500 10" fill="none" stroke="#fff" /></svg></button>
        <button class="bare">ESP</button>
        <button class="bare clock">21:30<br>26-03-2021</button>
        <button class="bare notif" aria-label="Notificaciones"><svg width="16" height="16" viewBox="0 0 16 16"><path d="M0 0h16v12H9l-3 4v-4H0z" fill="#fff" /><path d="M2 3.500h12M2 6.500h12M2 9.500h7" stroke="#2a2826" /></svg><span class="badge">1</span></button>
      </div>
    </div>
  </div>
</template>

<style>
html, body { margin: 0; background: #191919; }
</style>

<style scoped>
.screen { height: 100vh; display: flex; flex-direction: column; overflow: hidden; font: 12px/16px Roboto, "Noto Sans", sans-serif; color: #fff; background: #191919; }
.defs { position: absolute; width: 0; height: 0; }
button { font: inherit; color: inherit; background: none; border: 0; margin: 0; padding: 0; }
svg { flex: none; display: block; }
.i16 { width: 16px; height: 16px; }
.i14 { width: 14px; height: 14px; }
.bare { display: flex; align-items: center; justify-content: center; }

.titlebar { flex: none; display: flex; align-items: center; height: 23px; background: #4c4a48; }
.bar { width: 2px; height: 12px; margin: 0 8px 0 7px; background: #777573; }
.titlebar .bare + .bare { margin-left: 6px; }
h1 { flex: 1; margin: 0; font: inherit; white-space: nowrap; }
.winctl { display: flex; padding-right: 2px; }
.winctl .bare, .winctl .bare + .bare { width: 46px; height: 23px; margin: 0; }

.tabs { flex: none; display: flex; align-items: center; height: 23px; background: #000; }
.tab { height: 23px; }
.tab.file { width: 56px; background: #555; }
.tab.current { width: 56px; background: #202020; border: 1px solid #2b2b2b; border-bottom: 0; }
.tab.share { width: 82px; }
.tab.view { width: 52px; }
.collapse { margin-left: auto; width: 26px; height: 23px; }
.help { width: 16px; height: 16px; margin-right: 3px; border-radius: 50%; border: 1px solid #fff; background: #0a78d7; line-height: 14px; font-weight: 700; }

.ribbon { flex: none; display: grid; grid-template-columns: 311px 196px 173px 155px 141px 1fr; background: #202020; border-top: 1px solid #2b2b2b; border-bottom: 1px solid #2b2b2b; height: 91px; }
.group { display: flex; flex-direction: column; border-right: 1px solid #3a3a3a; padding-top: 4px; }
.tools { display: flex; height: 70px; padding-left: 3px; }
.big { width: 44px; display: flex; flex-direction: column; align-items: center; justify-content: flex-start; line-height: 13px; padding-top: 3px; white-space: nowrap; }
.big svg { width: 32px; height: 32px; margin-bottom: 4px; }
.big.wide { width: 82px; }
.big.narrow { width: 38px; }
.big.mid { width: 46px; }
.big.props { width: 70px; }
button:disabled { color: #a0a0a0; }
.stack { display: flex; flex-direction: column; padding-left: 3px; }
.small { display: flex; align-items: center; height: 22px; gap: 3px; white-space: nowrap; }
.select { padding-left: 4px; }
.tri { display: inline-block; border: 3px solid transparent; border-top-color: #ddd; border-bottom: 0; margin-left: 3px; vertical-align: 2px; }
.tri.alone { margin-left: 0; }
.divider { width: 1px; height: 54px; background: #505050; margin: 5px 3px 0 7px; }
.caption { text-align: center; color: #b0b0b0; line-height: 16px; }

.addressbar { flex: none; display: flex; align-items: center; height: 42px; padding: 0 12px 2px; box-sizing: border-box; }
.nav-arrow { width: 14px; margin-right: 16px; }
.recent { width: 8px; margin: 0 10px 0 -3px; }
.up { width: 12px; margin-right: 7px; }
.path { flex: 1; display: flex; align-items: center; height: 30px; box-sizing: border-box; border: 1px solid #535353; padding-left: 2px; }
.sep { margin: 0 9px 0 8px; }
.crumb { white-space: nowrap; }
.drop { margin-left: auto; width: 30px; height: 28px; }
.reload { width: 29px; height: 28px; border-left: 1px solid #111; }
.search { width: 142px; height: 30px; box-sizing: border-box; margin-left: 12px; padding-left: 14px; display: flex; align-items: center; gap: 13px; border: 1px solid #535353; color: #858585; }
.search input { min-width: 0; flex: 1; border: 0; padding: 0; background: none; font: inherit; color: #fff; outline: 0; }
.search input::placeholder { color: #858585; opacity: 1; }

.body { flex: 1; display: flex; min-height: 0; }
.sidebar { flex: none; width: 178px; box-sizing: border-box; padding: 16px 2px 0 1px; border-right: 1px solid #2b2b2b; overflow: hidden; }
ul { list-style: none; margin: 0 0 8px; padding: 0; }
.nav { display: flex; align-items: center; height: 24px; box-sizing: border-box; gap: 5px; color: #fff; text-decoration: none; white-space: nowrap; overflow: hidden; border: solid #191919; border-width: 1px 0; }
.level1 { padding-left: 23px; }
.level2 { padding-left: 31px; }
.active { background: #333; }
.content { flex: 1; background: #202020; padding-left: 15px; }

table { table-layout: fixed; width: 602px; border-spacing: 0; color: #dedede; }
.c-name { width: 258px; }
.c-date { width: 144px; }
.c-type { width: 120px; }
.c-size { width: 80px; }
th { position: relative; height: 25px; padding: 0 6px; text-align: left; font-weight: 400; border-right: 1px solid #636363; box-sizing: border-box; }
th:first-child { padding-left: 3px; }
.sort { position: absolute; top: 0; left: 50%; margin-left: -6px; }
tbody::before { content: ""; display: block; height: 6px; }
td { height: 21px; padding: 1px 6px 0; white-space: nowrap; line-height: 20px; box-sizing: border-box; position: relative; background-clip: padding-box; }
td:first-child { padding-left: 4px; color: #fff; }
td:last-child { text-align: right; padding-right: 3px; border-right: 5px solid transparent; }
.name { display: flex; align-items: flex-start; gap: 4px; }
.name svg { margin-top: 1px; }
.selected td { background-color: #777; }
.tooltip { position: absolute; z-index: 2; left: -20px; top: 19px; padding: 1px 6px 2px 5px; border: 1px solid #767676; background: #2b2b2b; color: #fff; line-height: 15px; box-shadow: 3px 3px 3px #0008; }

.status { flex: none; display: flex; align-items: center; height: 23px; background: #333; padding-left: 14px; color: #dedede; }
.status span { line-height: 12px; padding-right: 9px; margin-right: 10px; border-right: 1px solid #fff; }
.views { margin-left: auto; display: flex; padding-right: 4px; }
.view-btn { width: 22px; height: 23px; display: grid; place-items: center; box-sizing: border-box; }
.view-btn.on { background: #626262; border: 1px solid #858585; }

.taskbar { flex: none; display: flex; height: 40px; background: linear-gradient(90deg, #27241b 0%, #403a2b 18%, #413e2d 36%, #2c2726 43%, #292524 64%, #40291f 82%, #24201e 96%); }
.sys { width: 48px; display: grid; place-items: center; }
.task { width: 105px; display: flex; align-items: center; gap: 4px; padding-left: 4px; border-bottom: 2px solid #bab7b2; white-space: nowrap; box-sizing: border-box; }
.task svg { width: 24px; height: 24px; }
.task.open { width: 114px; background: #69645a; padding-left: 6px; gap: 6px; }
.pinned { width: 45px; display: grid; place-items: center; }
.pinned svg { width: 24px; height: 24px; }
.apps { display: flex; gap: 9px; margin-left: 4px; }
.tray { margin-left: auto; margin-right: 4px; padding-right: 20px; border-right: 1px solid #6b6864; display: flex; align-items: center; gap: 8px; height: 40px; }
.meter { width: 157px; margin: 0 2px 0 0; display: grid; grid-template-columns: auto auto; justify-content: space-between; line-height: 15px; font-weight: 700; color: #ff0; }
.meter dd { margin: 0; text-align: right; }
.clock { line-height: 18px; text-align: center; margin-left: 8px; }
.notif { position: relative; width: 16px; height: 16px; margin-left: 10px; }
.badge { position: absolute; left: 7px; top: 8px; width: 14px; height: 14px; line-height: 14px; border-radius: 50%; border: 1px solid #999; background: #2a2826; font-size: 11px; }
</style>
